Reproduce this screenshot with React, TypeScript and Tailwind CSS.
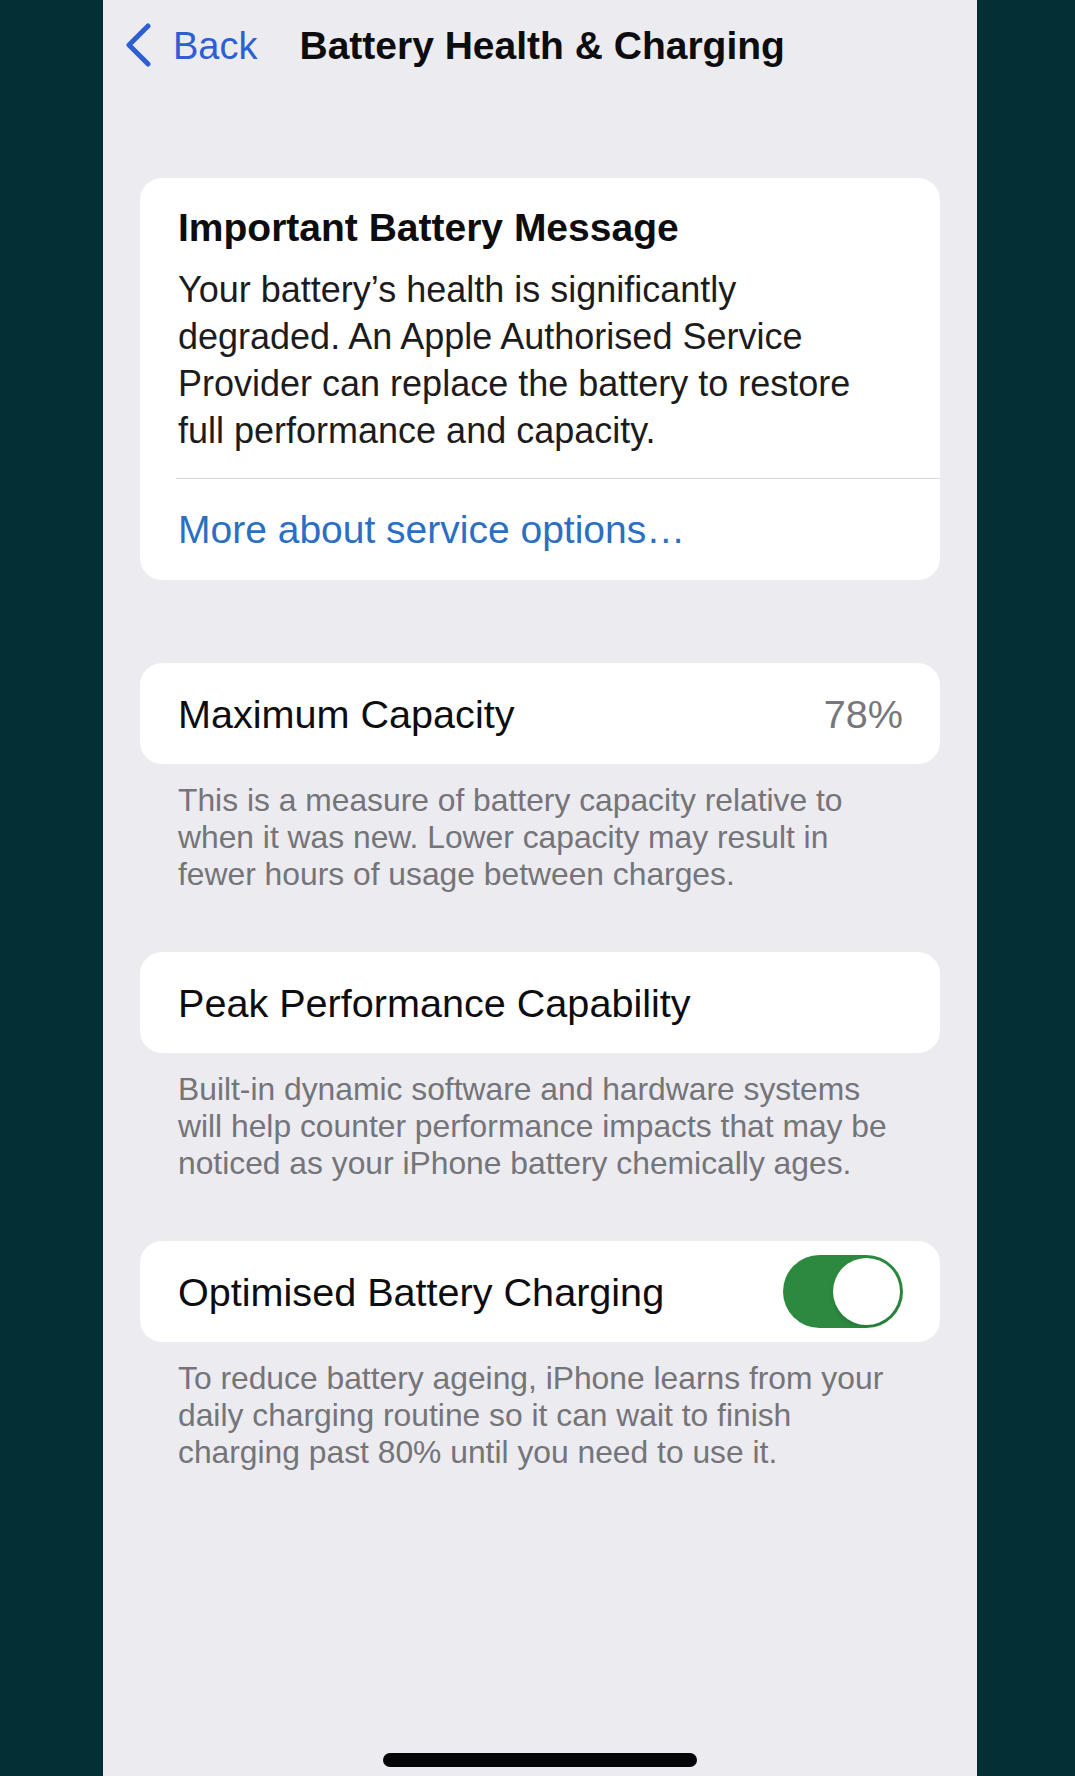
import { useState } from "react";

const sections = [
  {
    label: "Maximum Capacity",
    value: "78%",
    footer: [
      "This is a measure of battery capacity relative to",
      "when it was new. Lower capacity may result in",
      "fewer hours of usage between charges.",
    ],
  },
  {
    label: "Peak Performance Capability",
    footer: [
      "Built-in dynamic software and hardware systems",
      "will help counter performance impacts that may be",
      "noticed as your iPhone battery chemically ages.",
    ],
  },
  {
    label: "Optimised Battery Charging",
    toggle: true,
    footer: [
      "To reduce battery ageing, iPhone learns from your",
      "daily charging routine so it can wait to finish",
      "charging past 80% until you need to use it.",
    ],
  },
];

const messageLines = [
  "Your battery\u2019s health is significantly",
  "degraded. An Apple Authorised Service",
  "Provider can replace the battery to restore",
  "full performance and capacity.",
];

function Toggle({ on, onChange }: { on: boolean; onChange: () => void }) {
  return (
    <button
      onClick={onChange}
      className={`flex h-[73px] w-[120px] items-center rounded-full p-[3px] ${
        on ? "justify-end bg-[#2b8a40]" : "justify-start bg-[#dcdce0]"
      }`}
    >
      <span className="block h-[67px] w-[67px] rounded-full bg-white shadow-[0_2px_4px_rgba(0,0,0,0.15)]" />
    </button>
  );
}

export default function App() {
  const [optimised, setOptimised] = useState(true);

  return (
    <div className="flex min-h-[1776px] bg-[#023035] font-['Liberation_Sans',Arial,sans-serif]">
      <div className="ml-[103px] flex min-h-[1776px] w-[874px] flex-col bg-[#ebebf0]">
        {/* nav bar */}
        <div className="flex h-[92px] items-center pl-[21px]">
          <svg width="28" height="44" viewBox="0 0 28 44" fill="none" className="-mt-[3px]">
            <path
              d="M24 3 L5 22 L24 41"
              stroke="#2d5fd3"
              strokeWidth="5"
              strokeLinecap="round"
              strokeLinejoin="round"
            />
          </svg>
          <span className="ml-[21px] text-[38px] leading-[48px] text-[#2d5fd3]">Back</span>
          <span className="ml-[42px] text-[39px] font-bold leading-[48px] text-[#0d0d0f]">
            Battery Health &amp; Charging
          </span>
        </div>

        <div className="mx-[37px] mt-[86px] flex flex-col">
          {/* service message */}
          <div className="rounded-[22px] bg-white">
            <div className="px-[38px] pt-[26px] pb-[24px]">
              <div className="text-[39px] font-bold leading-[48px] text-[#0d0d0f]">
                Important Battery Message
              </div>
              <div className="mt-[14px] text-[36px] leading-[47px] text-[#1c1c1e]">
                {messageLines.map((line) => (
                  <div key={line} className="whitespace-nowrap">
                    {line}
                  </div>
                ))}
              </div>
            </div>
            <div className="ml-[36px] h-px bg-[#d8d8dc]" />
            <div className="px-[38px] pt-[27px] pb-[26px] text-[39px] leading-[48px] text-[#2b6fc4]">
              More about service options…
            </div>
          </div>

          {sections.map((s, i) => (
            <div key={s.label} className={i === 0 ? "mt-[83px]" : "mt-[59px]"}>
              <div className="flex h-[101px] items-center justify-between rounded-[22px] bg-white pl-[38px] pr-[37px]">
                <span className="text-[39.6px] leading-[48px] text-[#0d0d0f]">{s.label}</span>
                {s.value && (
                  <span className="text-[39.6px] leading-[48px] text-[#77777c]">{s.value}</span>
                )}
                {s.toggle && (
                  <Toggle on={optimised} onChange={() => setOptimised(!optimised)} />
                )}
              </div>
              <div className="mt-[18px] px-[38px] text-[31.8px] leading-[37px] text-[#747479]">
                {s.footer.map((line) => (
                  <div key={line} className="whitespace-nowrap">
                    {line}
                  </div>
                ))}
              </div>
            </div>
          ))}
        </div>

        {/* home indicator */}
        <div className="mt-auto flex justify-center pb-[9px]">
          <div className="h-[14px] w-[314px] rounded-full bg-[#050507]" />
        </div>
      </div>
    </div>
  );
}
